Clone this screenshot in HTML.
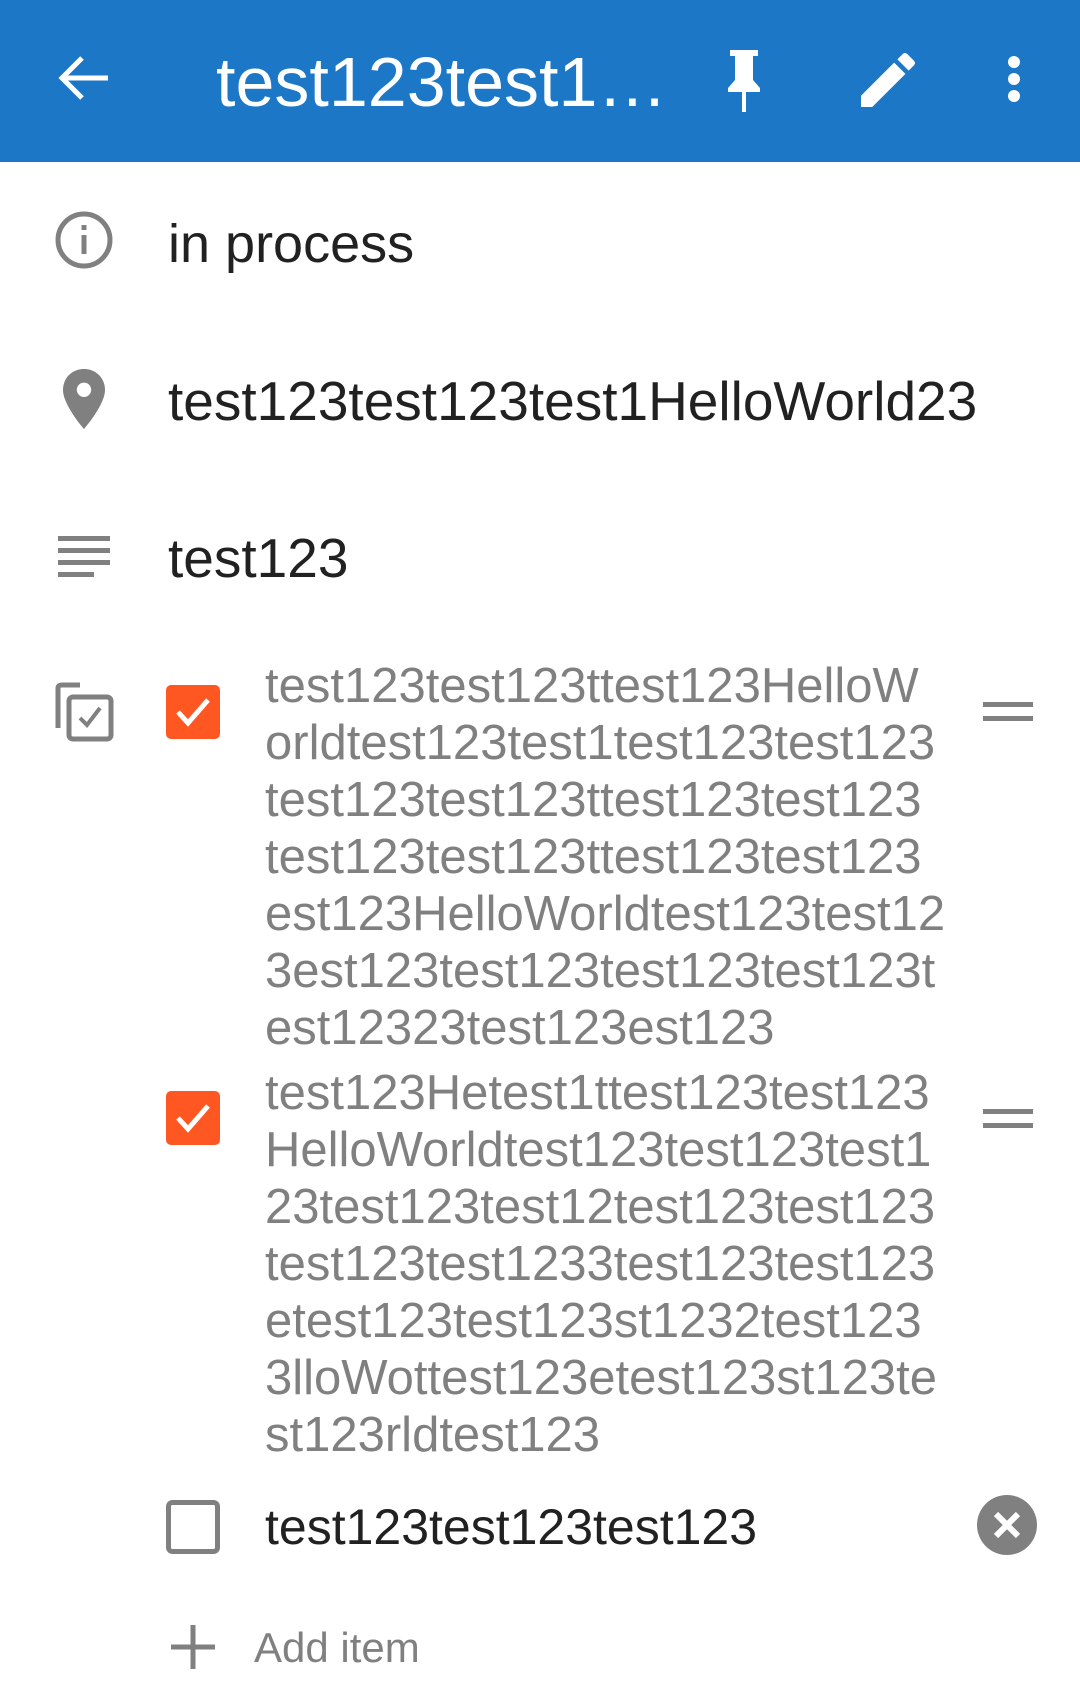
<!DOCTYPE html>
<html><head><meta charset="utf-8"><style>
*{margin:0;padding:0;box-sizing:border-box}
body{width:1080px;height:1699px;background:#fff;font-family:"Liberation Sans",sans-serif;position:relative;overflow:hidden}
.bar{position:absolute;left:0;top:0;width:1080px;height:162px;background:#1c77c7}
.abs{position:absolute}
.t{position:absolute;white-space:nowrap;line-height:57px}
.g{color:#808080;font-size:49px}
.d{color:#212121;font-size:50px}
.h{color:#212121;font-size:55px;line-height:60px}
</style></head><body>
<div class="bar"></div>
<svg class="abs" style="left:54px;top:54px" width="60" height="48" viewBox="0 0 60 48"><path d="M28 4 L8 24 L28 44 M8 24 H54" stroke="#fff" stroke-width="5" fill="none"/></svg>
<div class="t" style="left:216px;top:42px;line-height:80px;font-size:70px;color:#fff">test123test1…</div>
<svg class="abs" style="left:722px;top:48px" width="44" height="66" viewBox="0 0 44 66"><path d="M8 2 H36 V8 H31 V32 L38 40 V44 H24 V64 H20 V44 H6 V40 L13 32 V8 H8 Z" fill="#fff"/></svg>
<svg class="abs" style="left:852px;top:44px" width="72" height="72" viewBox="0 0 24 24"><path d="M3 17.25V21h3.75L17.81 9.94l-3.75-3.75L3 17.25zM20.71 7.04a1 1 0 000-1.41l-2.34-2.34a1 1 0 00-1.41 0l-1.83 1.83 3.75 3.75 1.83-1.83z" fill="#fff"/></svg>
<svg class="abs" style="left:1000px;top:54px" width="28" height="50" viewBox="0 0 28 50"><circle cx="14" cy="8" r="6" fill="#fff"/><circle cx="14" cy="25" r="6" fill="#fff"/><circle cx="14" cy="42" r="6" fill="#fff"/></svg>

<svg class="abs" style="left:54px;top:210px" width="60" height="60" viewBox="0 0 60 60"><circle cx="30" cy="30" r="26" stroke="#808080" stroke-width="5" fill="none"/><rect x="27.5" y="25" width="5" height="19" fill="#808080"/><rect x="27.5" y="15" width="5" height="5" fill="#808080"/></svg>
<div class="t h" style="left:168px;top:214px;font-size:54px">in process</div>

<svg class="abs" style="left:60px;top:367px" width="48" height="66" viewBox="0 0 24 33"><path d="M12 1C6 1 1.5 5.5 1.5 11.5 1.5 19 12 31 12 31S22.5 19 22.5 11.5C22.5 5.5 18 1 12 1zm0 14a3.6 3.6 0 110-7.2 3.6 3.6 0 010 7.2z" fill="#808080"/></svg>
<div class="t h" style="left:168px;top:371px">test123test123test1HelloWorld23</div>

<svg class="abs" style="left:58px;top:532px" width="52" height="48" viewBox="0 0 52 48"><g fill="#808080"><rect x="0" y="4" width="52" height="5"/><rect x="0" y="16" width="52" height="5"/><rect x="0" y="28" width="52" height="5"/><rect x="0" y="40" width="36" height="5"/></g></svg>
<div class="t h" style="left:168px;top:528px">test123</div>

<svg class="abs" style="left:54px;top:682px" width="62" height="62" viewBox="0 0 62 62"><path d="M4 6 Q4 3 8 3 H26 M4 6 V46" stroke="#808080" stroke-width="5" fill="none"/><rect x="15" y="15" width="42" height="42" rx="4" stroke="#808080" stroke-width="5" fill="none"/><path d="M26 36 L33 43 L46 26" stroke="#808080" stroke-width="4" fill="none"/></svg>

<svg class="abs" style="left:166px;top:685px" width="54" height="54" viewBox="0 0 54 54"><rect width="54" height="54" rx="5" fill="#ff5722"/><path d="M12 27 L22 38 L42 15" stroke="#fff" stroke-width="5" fill="none"/></svg>
<div class="t g" style="left:265px;top:658px">test123test123ttest123HelloW</div>
<div class="t g" style="left:265px;top:715px">orldtest123test1test123test123</div>
<div class="t g" style="left:265px;top:772px">test123test123ttest123test123</div>
<div class="t g" style="left:265px;top:829px">test123test123ttest123test123</div>
<div class="t g" style="left:265px;top:886px">est123HelloWorldtest123test12</div>
<div class="t g" style="left:265px;top:943px">3est123test123test123test123t</div>
<div class="t g" style="left:265px;top:1000px">est12323test123est123</div>
<svg class="abs" style="left:983px;top:700px" width="50" height="24"><rect y="2" width="50" height="5" fill="#808080"/><rect y="16" width="50" height="5" fill="#808080"/></svg>

<svg class="abs" style="left:166px;top:1091px" width="54" height="54" viewBox="0 0 54 54"><rect width="54" height="54" rx="5" fill="#ff5722"/><path d="M12 27 L22 38 L42 15" stroke="#fff" stroke-width="5" fill="none"/></svg>
<div class="t g" style="left:265px;top:1065px">test123Hetest1ttest123test123</div>
<div class="t g" style="left:265px;top:1122px">HelloWorldtest123test123test1</div>
<div class="t g" style="left:265px;top:1179px">23test123test12test123test123</div>
<div class="t g" style="left:265px;top:1236px">test123test1233test123test123</div>
<div class="t g" style="left:265px;top:1293px">etest123test123st1232test123</div>
<div class="t g" style="left:265px;top:1350px">3lloWottest123etest123st123te</div>
<div class="t g" style="left:265px;top:1407px">st123rldtest123</div>
<svg class="abs" style="left:983px;top:1107px" width="50" height="24"><rect y="2" width="50" height="5" fill="#808080"/><rect y="16" width="50" height="5" fill="#808080"/></svg>

<svg class="abs" style="left:166px;top:1500px" width="54" height="54" viewBox="0 0 54 54"><rect x="2.5" y="2.5" width="49" height="49" rx="4" stroke="#808080" stroke-width="5" fill="none"/></svg>
<div class="t d" style="left:265px;top:1499px">test123test123test123</div>
<svg class="abs" style="left:977px;top:1495px" width="60" height="60" viewBox="0 0 60 60"><circle cx="30" cy="30" r="30" fill="#808080"/><path d="M19 19 L41 41 M41 19 L19 41" stroke="#fff" stroke-width="6"/></svg>

<svg class="abs" style="left:171px;top:1625px" width="44" height="44"><rect x="19.5" y="0" width="5" height="44" fill="#808080"/><rect x="0" y="19.5" width="44" height="5" fill="#808080"/></svg>
<div class="t g" style="left:254px;top:1619px;font-size:42px">Add item</div>
</body></html>
